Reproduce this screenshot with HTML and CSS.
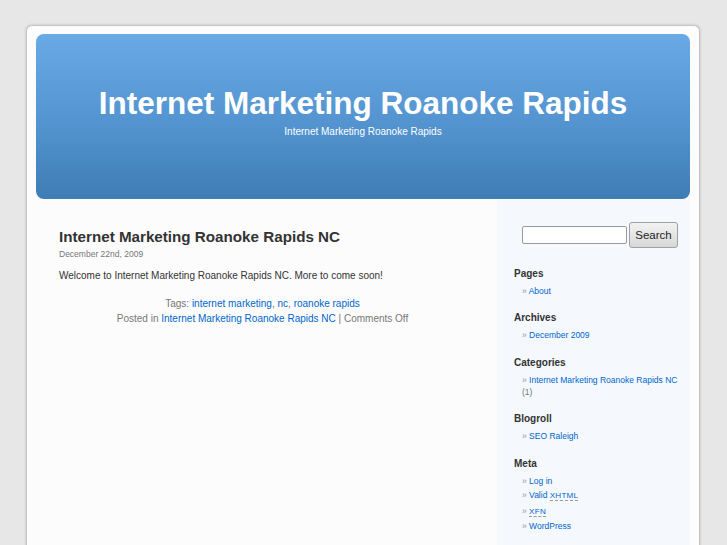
FILE: index.html
```html
<!DOCTYPE html>
<html lang="en">
<head>
<meta charset="utf-8">
<title>Internet Marketing Roanoke Rapids</title>
<link rel="stylesheet" href="styles.css">
</head>
<body>
<div class="page">
  <header class="header">
    <h1 class="site-title">Internet Marketing Roanoke Rapids</h1>
    <div class="site-desc">Internet Marketing Roanoke Rapids</div>
  </header>
  <div class="main">
    <div class="content">
      <div class="post">
        <h2 class="post-title">Internet Marketing Roanoke Rapids NC</h2>
        <div class="post-date">December 22nd, 2009</div>
        <p class="entry">Welcome to Internet Marketing Roanoke Rapids NC. More to come soon!</p>
        <p class="postmeta">Tags: <a href="#">internet marketing</a>, <a href="#">nc</a>, <a href="#">roanoke rapids</a><br>Posted in <a href="#">Internet Marketing Roanoke Rapids NC</a> | Comments Off</p>
      </div>
    </div>
    <aside class="sidebar">
      <form class="search">
        <input class="search-input" type="text">
        <button class="search-btn" type="button">Search</button>
      </form>
      <h2 class="side-head">Pages</h2>
      <ul class="side-list">
        <li><a href="#">About</a></li>
      </ul>
      <h2 class="side-head">Archives</h2>
      <ul class="side-list">
        <li><a href="#">December 2009</a></li>
      </ul>
      <h2 class="side-head">Categories</h2>
      <ul class="side-list">
        <li><a href="#">Internet Marketing Roanoke Rapids NC</a> (1)</li>
      </ul>
      <h2 class="side-head">Blogroll</h2>
      <ul class="side-list">
        <li><a href="#">SEO Raleigh</a></li>
      </ul>
      <h2 class="side-head">Meta</h2>
      <ul class="side-list">
        <li><a href="#">Log in</a></li>
        <li><a href="#">Valid <abbr class="ab">XHTML</abbr></a></li>
        <li><a href="#"><abbr class="ab">XFN</abbr></a></li>
        <li><a href="#">WordPress</a></li>
      </ul>
    </aside>
  </div>
</div>
</body>
</html>
```
FILE: styles.css
```css
html, body {
  margin: 0;
  padding: 0;
}
body {
  background: #e7e7e7;
  font-family: "Liberation Sans", Arial, sans-serif;
  color: #333;
}
a {
  color: #0066cc;
  text-decoration: none;
}
.page {
  width: 654px;
  margin: 25px auto 0 26px;
  padding: 8px 9px 0;
  background: #fcfcfc;
  border: 1px solid #c4c4c4;
  border-bottom: none;
  border-radius: 6px 6px 0 0;
  box-shadow: 0 0 3px rgba(0, 0, 0, 0.18);
  min-height: 512px;
}
.header {
  height: 165px;
  box-sizing: border-box;
  border-radius: 8px;
  background: linear-gradient(to bottom, #69aae6 0%, #5596d2 50%, #3e7cb4 100%);
  text-align: center;
  color: #fff;
  padding-top: 51px;
}
.site-title {
  margin: 0;
  font-size: 31.5px;
  line-height: 36px;
  font-weight: bold;
  color: #fff;
}
.site-desc {
  margin-top: 3.5px;
  font-size: 10px;
  line-height: 13px;
  color: #fff;
}
.main {
  display: flex;
  margin-top: 1px;
  min-height: 346px;
}
.content {
  flex: 1;
  padding: 28px 31px 0 23px;
}
.post-title {
  margin: 0;
  font-size: 15.2px;
  line-height: 18px;
  font-weight: bold;
  color: #333;
}
.post-date {
  margin-top: 2px;
  font-size: 8.5px;
  line-height: 12px;
  color: #777;
}
.entry {
  margin: 7.5px 0 0;
  font-size: 10px;
  line-height: 15px;
  color: #333;
}
.postmeta {
  margin: 13px 0 0;
  font-size: 10px;
  line-height: 15px;
  color: #777;
  text-align: center;
}
.sidebar {
  width: 193px;
  flex: none;
  background: #f5f8fc;
  box-sizing: border-box;
  padding: 22px 10px 20px 17px;
}
.search {
  display: flex;
  align-items: center;
  margin: 0 0 18.5px 8px;
  gap: 2px;
}
.search-input {
  width: 105px;
  height: 18px;
  box-sizing: border-box;
  border: 1px solid #9a9a9a;
  border-radius: 2px;
  background: #fff;
  margin: 0;
  padding: 0 2px;
}
.search-btn {
  width: 49px;
  height: 26px;
  box-sizing: border-box;
  border: 1px solid #a0a0a0;
  border-radius: 3px;
  background: linear-gradient(to bottom, #f2f2f2, #d8d8d8);
  font-family: "Liberation Sans", Arial, sans-serif;
  font-size: 11.5px;
  color: #222;
  padding: 0;
  margin: 0;
}
.side-head {
  margin: 0;
  font-size: 10px;
  line-height: 13px;
  font-weight: bold;
  color: #333;
}
.side-list {
  list-style: none;
  margin: 4px 0 13px;
  padding: 0 0 0 8px;
  font-size: 8.5px;
  color: #777;
}
.side-list li {
  line-height: 12px;
  padding: 1.25px 0;
}
.side-list li::before {
  content: "\00BB\0020";
  color: #999;
}
.ab {
  font-size: 0.95em;
  letter-spacing: 0.03em;
  text-decoration: none;
  border-bottom: 1px dashed #999;
}
```
